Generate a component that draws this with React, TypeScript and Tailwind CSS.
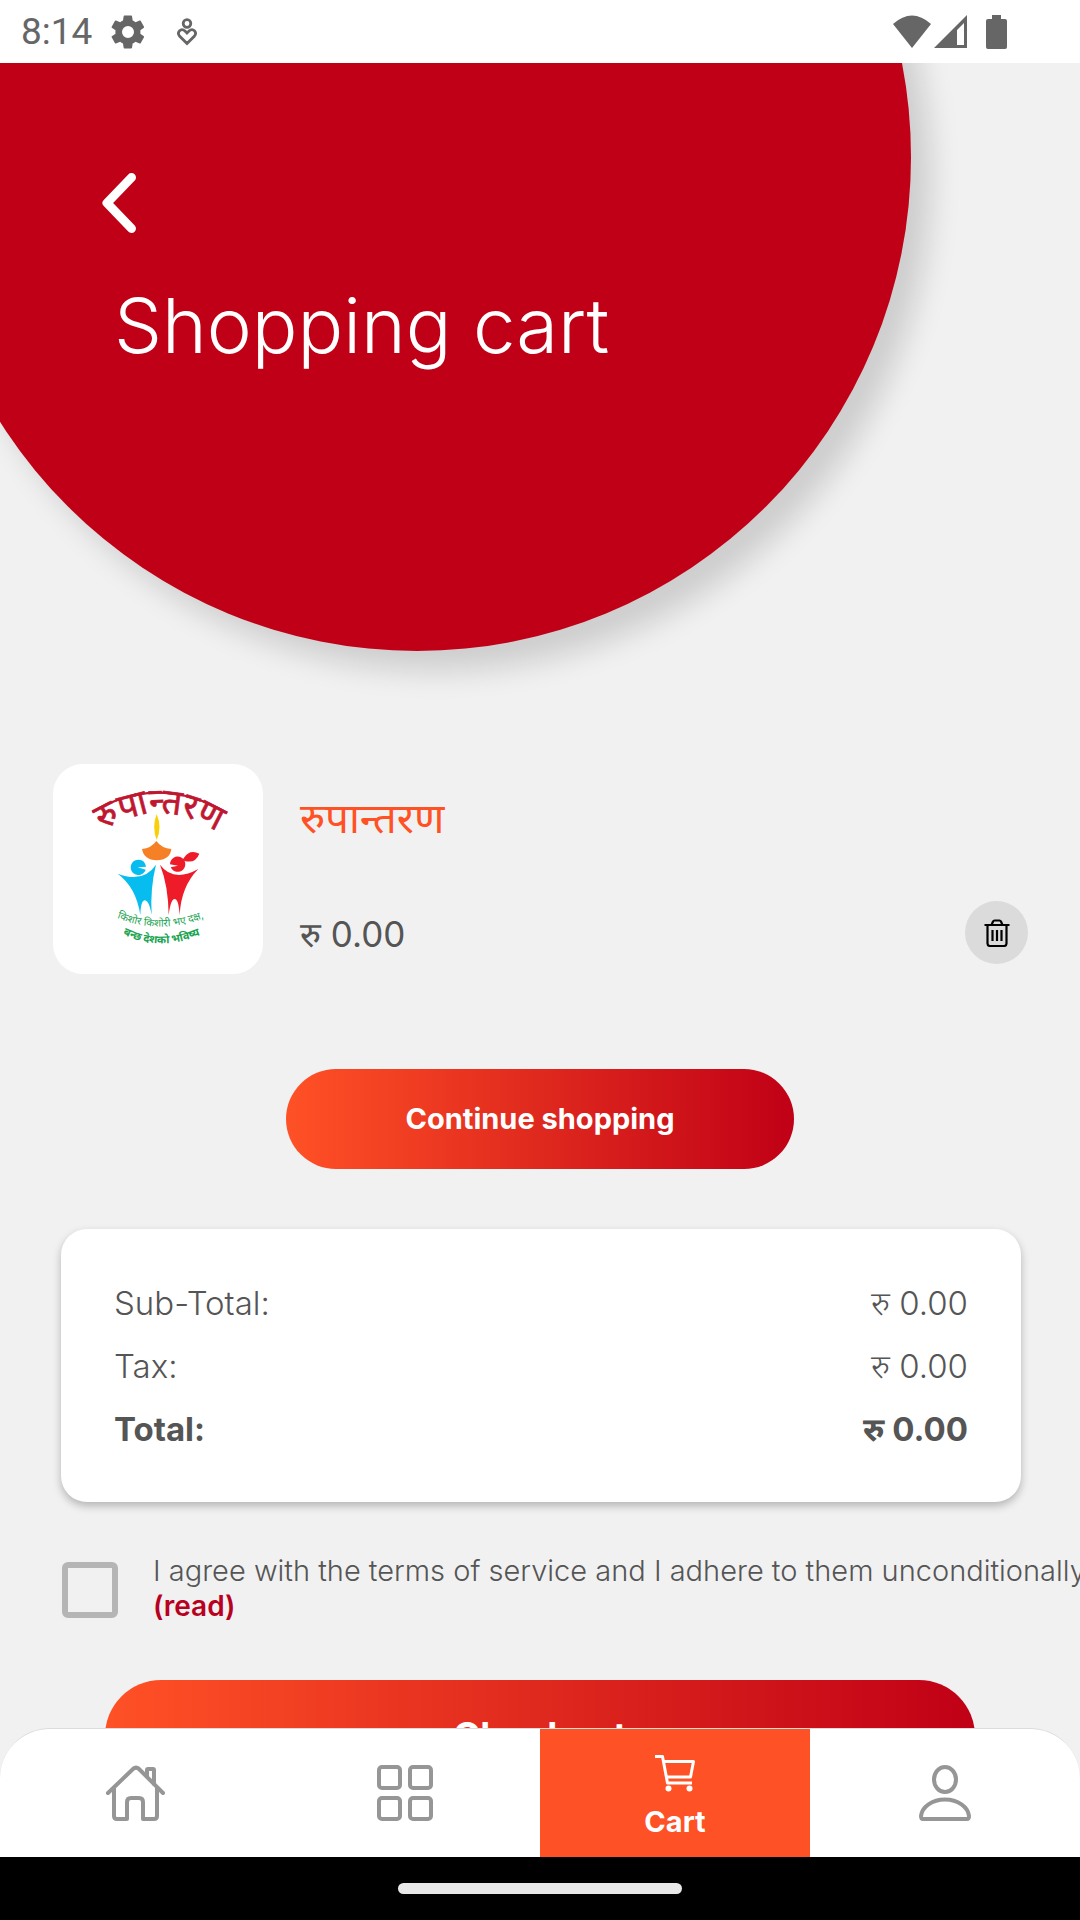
import { useState } from "react";

const navItems = [
  { label: "Home", icon: HomeIcon, active: false },
  { label: "Categories", icon: GridIcon, active: false },
  { label: "Cart", icon: CartIcon, active: true },
  { label: "Account", icon: UserIcon, active: false },
];

const totals = [
  { label: "Sub-Total:", value: "रु 0.00", bold: false },
  { label: "Tax:", value: "रु 0.00", bold: false },
  { label: "Total:", value: "रु 0.00", bold: true },
];

function HomeIcon() {
  return (
    <svg width="60" height="56" viewBox="0 0 60 56" fill="none" stroke="currentColor" strokeWidth="4" strokeLinecap="round" strokeLinejoin="round">
      <path d="M3 28 28 4q3-3 6 0l24 24" />
      <path d="M9 23v28q0 3 3 3h10V37q0-4 4-4h8q4 0 4 4v17h11q3 0 3-3V23" />
      <path d="M42 11V5q0-1 1-1h5q1 0 1 1v14" />
    </svg>
  );
}

function GridIcon() {
  return (
    <svg width="56" height="56" viewBox="0 0 56 56" fill="none" stroke="currentColor" strokeWidth="4">
      <rect x="2" y="2" width="21" height="21" rx="3" />
      <rect x="33" y="2" width="21" height="21" rx="3" />
      <rect x="2" y="33" width="21" height="21" rx="3" />
      <rect x="33" y="33" width="21" height="21" rx="3" />
    </svg>
  );
}

function CartIcon() {
  return (
    <svg width="42" height="38" viewBox="0 0 42 38" fill="none" stroke="currentColor" strokeWidth="3" strokeLinejoin="round">
      <path d="M1 2.500h7.500L13.500 29H38" />
      <path d="M10 7.500h29.500L36.500 23H12.500" />
      <circle cx="14.500" cy="34.500" r="3" fill="currentColor" stroke="none" />
      <circle cx="35.500" cy="34.500" r="3" fill="currentColor" stroke="none" />
    </svg>
  );
}

function UserIcon() {
  return (
    <svg width="52" height="56" viewBox="0 0 52 56" fill="none" stroke="currentColor" strokeWidth="4" strokeLinejoin="round">
      <ellipse cx="26" cy="14.500" rx="11" ry="12.500" />
      <path d="M4 54q-2 0-2-3c1-9 11-16.500 24-16.500s23 7.500 24 16.500q0 3-2 3Z" />
    </svg>
  );
}

function TrashIcon() {
  return (
    <svg width="26" height="28" viewBox="0 0 26 28" fill="none" stroke="currentColor" strokeWidth="2.200">
      <path d="M0.500 6h25M7.500 6l1.500-3.500q.5-1 1.500-1h5q1 0 1.500 1L18.500 6" />
      <path d="M3.500 6v18.500q0 2.500 2.500 2.500h14q2.500 0 2.500-2.500V6" />
      <path d="M8.500 11v11M13 11v11M17.500 11v11" />
    </svg>
  );
}

function StatusBar() {
  return (
    <div className="flex h-[63px] shrink-0 items-center bg-white pr-[73px] pl-[21px] text-[#666]">
      <span className="font-['Roboto',sans-serif] text-[37px]">8:14</span>
      <svg className="ml-4" width="40" height="40" viewBox="0 0 24 24" fill="currentColor">
        <path d="M19.400 13a7.500 7.500 0 0 0 0-2l2.100-1.600a.5.5 0 0 0 .1-.6l-2-3.500a.5.5 0 0 0-.6-.2l-2.500 1a7.300 7.300 0 0 0-1.700-1l-.4-2.600a.5.5 0 0 0-.5-.4h-4a.5.5 0 0 0-.5.400L9 5.100a7.700 7.700 0 0 0-1.700 1l-2.500-1a.5.5 0 0 0-.6.200l-2 3.500a.5.5 0 0 0 .1.600L4.500 11a7.500 7.500 0 0 0 0 2l-2.200 1.600a.5.5 0 0 0-.1.600l2 3.500c.1.200.4.300.6.200l2.500-1c.5.400 1.100.7 1.700 1l.4 2.600c0 .2.200.4.500.4h4c.2 0 .5-.2.5-.4l.4-2.600a7 7 0 0 0 1.700-1l2.500 1c.2.100.5 0 .6-.2l2-3.500a.5.5 0 0 0-.1-.6ZM12 15.600a3.600 3.600 0 1 1 0-7.200 3.600 3.600 0 0 1 0 7.200Z" />
      </svg>
      <svg className="ml-7" width="22" height="28" viewBox="0 0 22 28" fill="none" stroke="currentColor" strokeWidth="2.800">
        <circle cx="11" cy="5.500" r="3.800" />
        <path d="m11 25.500-7.500-7.500c-3-4 1.500-8.500 5.500-5l2 2 2-2c4-3.500 8.500 1 5.500 5Z" />
      </svg>
      <div className="ml-auto flex items-center">
        <svg width="40" height="34" viewBox="0 0 40 34" fill="currentColor">
          <path d="M20 33 1 9q19-17 38 0Z" />
        </svg>
        <svg className="ml-[2px]" width="34" height="34" viewBox="0 0 34 34" fill="currentColor" fillRule="evenodd">
          <path d="M0 33 33 0v33ZM23 30h7V8l-7 7Z" />
        </svg>
        <svg className="ml-[18px]" width="21" height="34" viewBox="0 0 21 34" fill="currentColor">
          <path d="M6 0h9v4h4q2 0 2 2v26q0 2-2 2H2q-2 0-2-2V6q0-2 2-2h4Z" />
        </svg>
      </div>
    </div>
  );
}

function ProductLogo() {
  return (
    <svg className="size-full" viewBox="38 42 630 630" role="img" aria-label="रुपान्तरण">
      <defs>
        <path id="arcTop" d="M190 240Q357 138 526 243" />
        <path id="arcMid" d="M222 500Q355 560 500 500" />
        <path id="arcLow" d="M236 547Q355 612 492 550" />
      </defs>
      <path d="M156 186Q354 68 560 189" fill="none" stroke="#c01731" strokeWidth="7" />
      <text fill="#c01731" stroke="#c01731" strokeWidth="2" fontSize="106" textAnchor="middle">
        <textPath href="#arcTop" startOffset="50%">रुपान्तरण</textPath>
      </text>
      <path d="M349 192q17 40 0 78-15-38 0-78Z" fill="#f9cf0b" />
      <path d="M305 297q27-2 43-24 16 22 45 24-4 33-44 34-38-1-44-34Z" fill="#f58025" />
      <path d="M317 350a23 23 0 1 0-1 9l-24-7Z" fill="#07bdf0" />
      <path d="M232 371q76 30 115-27-18 72-13 150-8-43-20-43-13 0-14 45-12-84-68-125Z" fill="#07bdf0" />
      <path d="M389 343a23 23 0 1 1 2 9l22-5Z" fill="#ee1c28" />
      <path d="M431 323q17-26 46-12-13 32-46 21-6-2 0-9Z" fill="#ee1c28" />
      <path d="M359 344q40 54 115 13-52 52-56 139-3-49-15-49-12 0-18 48-1-88-26-151Z" fill="#ee1c28" />
      <text fill="#18a350" fontSize="31" textAnchor="middle">
        <textPath href="#arcMid" startOffset="50%">किशोर किशोरी भए दक्ष,</textPath>
      </text>
      <text fill="#18a350" fontSize="33" fontWeight="700" textAnchor="middle">
        <textPath href="#arcLow" startOffset="50%">बन्छ देशको भविष्य</textPath>
      </text>
    </svg>
  );
}

export default function App() {
  const [agreed, setAgreed] = useState<boolean>(false);

  return (
    <div className="flex h-screen flex-col bg-[#f1f1f1] font-['Inter','Noto_Sans_Devanagari','Noto_Sans',sans-serif] text-[#555]">
      <StatusBar />

      <main className="relative min-h-0 flex-1 overflow-x-hidden overflow-y-auto [scrollbar-width:none]">
        <div className="absolute -top-[400px] -left-[77px] size-[988px] rounded-full bg-[#c00016] shadow-[20px_20px_30px_rgba(0,0,0,0.15)]" />

        <header className="relative pt-[110px] pl-[102px] text-white">
          <button type="button" aria-label="Back" className="block">
            <svg width="34" height="60" viewBox="0 0 34 60" fill="none" stroke="currentColor" strokeWidth="9" strokeLinecap="round" strokeLinejoin="round">
              <path d="M29.500 4.500 5 30l24.500 25.500" />
            </svg>
          </button>
          <h1 className="mt-12 pl-3 text-[76px] leading-[88px] font-light">Shopping cart</h1>
        </header>

        <section className="mt-[395px] flex pr-[52px] pl-[53px]">
          <div className="size-[210px] rounded-[30px] bg-white">
            <ProductLogo />
          </div>
          <div className="ml-[37px] flex flex-1 flex-col justify-between pt-[30px] pb-4">
            <h2 className="text-[42px] leading-[48px] text-[#ff5126]">रुपान्तरण</h2>
            <p className="text-[35px] leading-[48px]">रु 0.00</p>
          </div>
          <button
            type="button"
            aria-label="Remove item"
            className="mb-[10px] flex size-[63px] items-center justify-center self-end rounded-full bg-[#dbdbdb] text-black"
          >
            <TrashIcon />
          </button>
        </section>

        <button
          type="button"
          className="mx-auto mt-[95px] block h-[100px] w-[508px] rounded-full bg-linear-to-r/srgb from-[#ff5126] to-[#c00016] text-[29px] font-bold text-white"
        >
          Continue shopping
        </button>

        <dl className="mt-15 mr-[59px] ml-[61px] rounded-[26px] bg-white px-[53px] pt-[43px] pb-[41px] text-[33px] leading-[63px] shadow-[0_4px_8px_rgba(0,0,0,0.25)]">
          {totals.map((row) => (
            <div key={row.label} className={row.bold ? "flex justify-between font-bold" : "flex justify-between font-light"}>
              <dt>{row.label}</dt>
              <dd>{row.value}</dd>
            </div>
          ))}
        </dl>

        <div className="mt-[51px] flex items-center pl-[62px]">
          <input
            id="agree"
            type="checkbox"
            checked={agreed}
            onChange={(e) => setAgreed(e.target.checked)}
            className="mt-[2px] size-14 shrink-0 appearance-none rounded-md border-6 border-[#b5b5b5] checked:bg-[#c00016]"
          />
          <div className="ml-[35px] text-[29px] leading-[35px] whitespace-nowrap">
            <label htmlFor="agree" className="block font-light">
              I agree with the terms of service and I adhere to them unconditionally
            </label>
            <a href="#terms" className="text-[28px] font-semibold text-[#b80020]">
              (read)
            </a>
          </div>
        </div>

        <div className="px-[105px] pt-14 pb-10">
          <button
            type="button"
            className="h-[112px] w-full rounded-full bg-linear-to-r/srgb from-[#ff5126] to-[#c00016] text-[37px] font-bold text-white"
          >
            Checkout
          </button>
        </div>
      </main>

      <nav className="grid h-[129px] shrink-0 grid-cols-4 overflow-hidden rounded-t-[50px] border-t border-[#dcdcdc] bg-white">
        {navItems.map(({ label, icon: Icon, active }) => (
          <a
            key={label}
            href={`#${label.toLowerCase()}`}
            aria-label={label}
            className={
              active
                ? "flex flex-col items-center justify-center gap-3 bg-[#ff5126] pt-[7px] text-[29px] leading-9 font-bold text-white"
                : "flex flex-col items-center justify-center text-[#969696]"
            }
          >
            <Icon />
            {active && <span>{label}</span>}
          </a>
        ))}
      </nav>

      <div className="flex h-[63px] shrink-0 items-center justify-center bg-black">
        <div className="h-[11px] w-[284px] rounded-full bg-[#e8e8e8]" />
      </div>
    </div>
  );
}
